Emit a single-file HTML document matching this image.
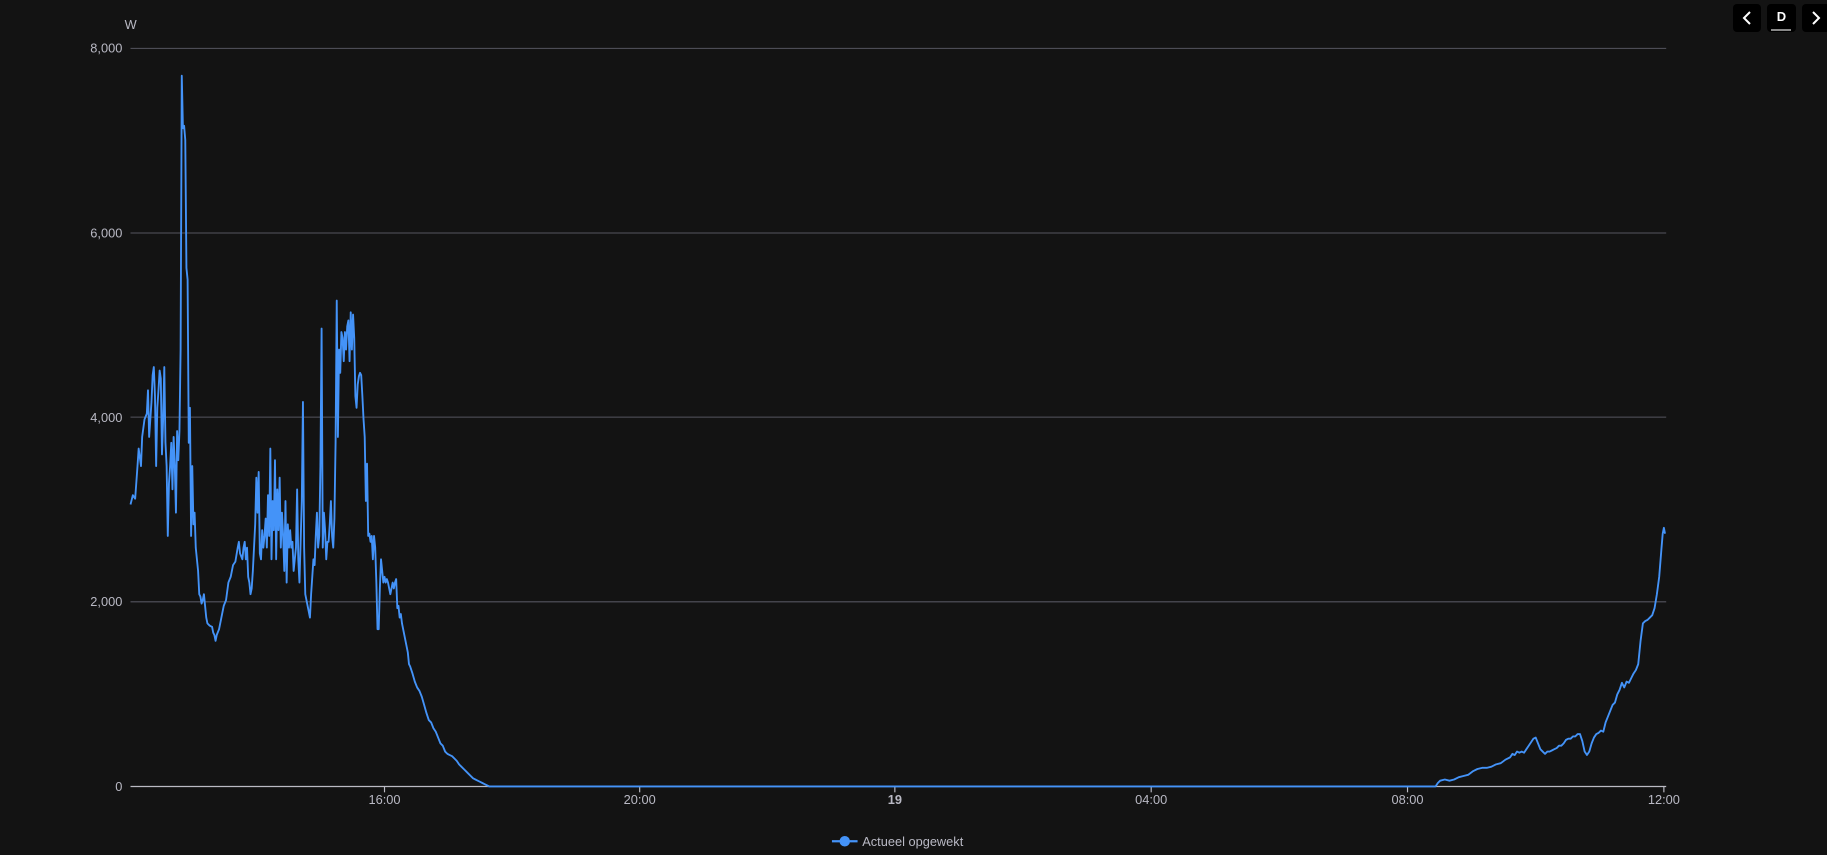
<!DOCTYPE html>
<html><head><meta charset="utf-8"><style>
html,body{margin:0;padding:0;background:#131313;width:1827px;height:855px;overflow:hidden}
svg{display:block}
text{font-family:"Liberation Sans",sans-serif;fill:#b9b9c4}
.btn{position:absolute;top:4px;width:28px;height:28px;background:#000;border-radius:4px}
</style></head><body>
<svg width="1827" height="855" viewBox="0 0 1568 733.8" style="position:absolute;left:0;top:0">
<g stroke="#55555f" stroke-width="0.9">
<line x1="112" y1="41.5" x2="1430" y2="41.5"/>
<line x1="112" y1="200" x2="1430" y2="200"/>
<line x1="112" y1="358" x2="1430" y2="358"/>
<line x1="112" y1="516.5" x2="1430" y2="516.5"/>
</g>
<line x1="112" y1="675" x2="1430" y2="675" stroke="#bbbbc4" stroke-width="1"/>
<g stroke="#bbbbc4" stroke-width="1">
<line x1="330" y1="675" x2="330" y2="680"/><line x1="549" y1="675" x2="549" y2="680"/>
<line x1="768" y1="675" x2="768" y2="680"/><line x1="988" y1="675" x2="988" y2="680"/>
<line x1="1208" y1="675" x2="1208" y2="680"/><line x1="1428" y1="675" x2="1428" y2="680"/>
</g>
<g font-size="11" text-anchor="end">
<text x="105" y="45">8,000</text><text x="105" y="204">6,000</text><text x="105" y="362">4,000</text>
<text x="105" y="520">2,000</text><text x="105" y="679">0</text>
</g>
<text x="107" y="25" font-size="11">W</text>
<g font-size="11" text-anchor="middle">
<text x="330" y="690">16:00</text><text x="549" y="690">20:00</text><text x="768" y="690" font-weight="bold">19</text>
<text x="988" y="690">04:00</text><text x="1208" y="690">08:00</text><text x="1428" y="690">12:00</text>
</g>
<line x1="714" y1="722" x2="736" y2="722" stroke="#4493f8" stroke-width="2"/>
<circle cx="725" cy="722" r="4.5" fill="#4493f8"/>
<text x="740" y="726" font-size="11">Actueel opgewekt</text>
<polyline fill="none" stroke="#4493f8" stroke-width="1.6" stroke-linejoin="round" points="112,433 114,425 116,428 118,400 119,385 121,400 122,375 124,360 126,355 127,335 128,375 129,360 130,345 131,322 132,315 133,340 134,400 135,350 136,335 137,318 138,325 139,390 140,360 141,315 142,380 143,400 144,460 145,415 146,400 147,380 148,420 149,375 150,400 151,440 152,370 153,395 154,370 155,300 156,65 157,110 158,108 159,120 160,230 161,240 162,380 163,350 164,460 165,400 166,450 167,440 168,470 169,480 170,490 171,510 172,512 173,518 174,515 175,510 176,520 177,530 178,535 180,537 182,538 183,543 184,545 185,550 186,545 188,540 190,530 192,520 194,515 196,500 198,495 200,485 202,482 204,470 205,465 206,475 208,480 209,470 210,465 211,480 212,470 213,495 214,500 215,510 216,505 217,490 218,470 219,450 220,410 221,440 222,405 223,475 224,480 225,455 226,470 227,460 228,445 229,470 230,425 231,460 232,385 233,480 234,430 235,455 236,395 237,480 238,420 239,455 240,410 241,470 242,440 243,460 244,490 245,430 246,500 247,450 248,470 249,455 250,470 251,465 252,490 253,480 254,470 255,420 256,480 257,500 258,465 259,430 260,345 261,470 262,510 263,515 264,520 265,525 266,530 267,510 268,495 269,480 270,485 271,460 272,440 273,470 274,460 275,400 276,282 277,470 278,440 279,455 280,480 281,465 282,465 283,450 284,430 285,460 286,470 287,445 288,380 289,258 290,375 291,300 292,320 293,285 294,290 295,310 296,285 297,300 298,280 299,275 300,310 301,268 302,300 303,270 304,290 305,340 306,350 307,330 308,323 309,320 310,322 311,340 312,360 313,375 314,430 315,398 316,460 317,458 318,465 319,460 320,480 321,460 322,470 323,500 324,540 325,540 326,505 327,480 328,490 329,500 330,495 331,500 332,497 333,500 334,505 335,510 336,505 337,500 338,505 339,500 340,497 341,522 342,520 343,530 344,527 345,535 346,540 348,550 350,560 351,570 352,572 354,578 356,585 358,590 360,593 362,598 364,605 366,612 368,618 370,620 372,625 374,628 376,633 378,638 380,640 382,645 384,647 386,648 388,649 390,651 392,653 394,656 396,658 398,660 400,662 402,664 404,666 406,668 408,669 410,670 412,671 414,672 416,673 418,674 420,675 1232,675 1234,672 1236,670 1240,669 1244,670 1248,669 1252,667 1256,666 1260,665 1264,662 1268,660 1272,659 1276,659 1280,658 1284,656 1288,655 1292,652 1296,650 1298,647 1300,648 1302,645 1304,646 1306,645 1308,646 1310,643 1312,640 1314,637 1316,634 1318,633 1320,638 1322,643 1324,645 1326,647 1328,645 1330,645 1332,644 1334,643 1336,642 1338,640 1340,640 1342,638 1344,635 1346,634 1348,634 1350,632 1352,632 1354,630 1356,630 1358,636 1360,645 1362,648 1364,645 1366,638 1368,633 1370,630 1372,629 1374,627 1376,628 1378,620 1380,615 1382,610 1384,605 1386,603 1388,596 1390,592 1392,586 1394,590 1396,585 1398,586 1400,582 1402,578 1404,575 1406,570 1408,550 1410,535 1412,533 1414,532 1416,530 1418,528 1420,522 1422,510 1424,495 1426,470 1427,458 1428,453 1429,458"/>
</svg>
<div class="btn" style="left:1733px"><svg width="28" height="28"><path d="M17 8 L11 14 L17 20" fill="none" stroke="#fff" stroke-width="2"/></svg></div>
<div class="btn" style="left:1767px;width:29px"><div style="position:absolute;left:0;right:0;top:5px;text-align:center;color:#fff;font:bold 13px 'Liberation Sans',sans-serif">D</div><div style="position:absolute;left:4px;right:5px;top:25px;height:2px;background:#888"></div></div>
<div class="btn" style="left:1802px"><svg width="28" height="28"><path d="M11 8 L17 14 L11 20" fill="none" stroke="#fff" stroke-width="2"/></svg></div>
</body></html>
